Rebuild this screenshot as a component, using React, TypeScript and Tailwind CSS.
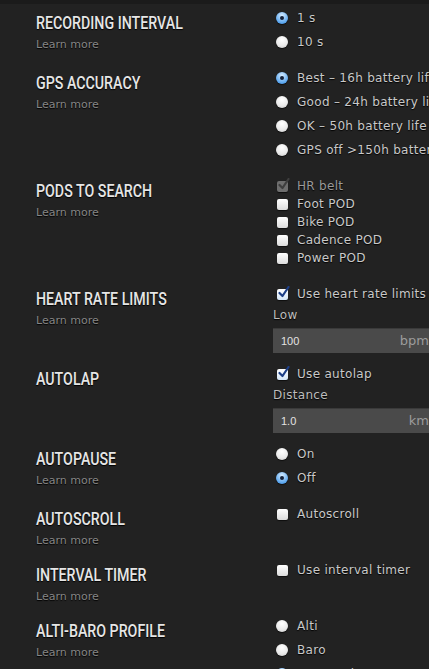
import React from 'react'

const body = { fontFamily: '"DejaVu Sans", "Liberation Sans", sans-serif' }
const head = { fontFamily: 'Roboto, "Liberation Sans", sans-serif' }

function Radio({ label, checked }: { label: string; checked?: boolean }) {
  return (
    <div className="flex h-6 items-center">
      <span
        className={
          'ml-[3px] flex h-3 w-3 shrink-0 items-center justify-center rounded-full shadow-[0_1px_1px_rgba(0,0,0,0.6)] ' +
          (checked
            ? 'bg-[radial-gradient(circle_at_50%_30%,#d6ecff,#5aa6ef_70%,#3f86d6)]'
            : 'bg-[radial-gradient(circle_at_50%_30%,#ffffff,#e9e9e9_60%,#c4c4c4)]')
        }
      >
        {checked && <span className="h-1 w-1 rounded-full bg-[#14213a]" />}
      </span>
      <span className="ml-[9px] whitespace-nowrap text-[12px] tracking-[0.3px] text-[#c9c9c9] [text-shadow:0_1px_1px_#000]">
        {label}
      </span>
    </div>
  )
}

function Check({ label, checked, disabled }: { label: string; checked?: boolean; disabled?: boolean }) {
  return (
    <div className="flex h-[18px] items-center">
      <span
        className={
          'relative ml-1 h-[11px] w-[11px] shrink-0 rounded-[2px] shadow-[0_1px_1px_rgba(0,0,0,0.6)] ' +
          (disabled
            ? 'bg-[#6e6e6e]'
            : checked
              ? 'bg-[linear-gradient(#ffffff,#d4e6f7)]'
              : 'bg-[linear-gradient(#ffffff,#dcdcdc)]')
        }
      >
        {checked && (
          <svg viewBox="0 0 12 12" className="absolute -top-[3px] left-[1px] h-[13px] w-[12px]">
            <path
              d="M1.5 6.5 L4.5 9.5 L10.5 0.5"
              fill="none"
              stroke={disabled ? '#3e3e3e' : '#1d3f86'}
              strokeWidth="2.2"
              strokeLinecap="round"
              strokeLinejoin="round"
            />
          </svg>
        )}
      </span>
      <span
        className={
          'ml-[9px] whitespace-nowrap text-[12px] tracking-[0.3px] [text-shadow:0_1px_1px_#000] ' +
          (disabled ? 'text-[#9a9a9a]' : 'text-[#c9c9c9]')
        }
      >
        {label}
      </span>
    </div>
  )
}

function Field({ label, value, unit }: { label: string; value: string; unit: string }) {
  return (
    <>
      <div className="mt-1 h-4 text-[12px] leading-4 tracking-[0.3px] text-[#bdbdbd] [text-shadow:0_1px_1px_#000]">
        {label}
      </div>
      <div className="mt-[5px] flex h-[25px] w-[164px] items-center justify-between border-t border-[#3a3a3a] bg-[#4a4a4a] pl-2 pr-2">
        <span className="text-[11px] text-[#e2e2e2]" style={{ fontFamily: '"Liberation Sans", sans-serif' }}>
          {value}
        </span>
        <span className="text-[13px] text-[#9c9c9c]">{unit}</span>
      </div>
    </>
  )
}

function Section({
  title,
  learn = true,
  top,
  bottom,
  children,
}: {
  title: string
  learn?: boolean
  top: string
  bottom: string
  children: React.ReactNode
}) {
  return (
    <div className={'flex ' + bottom}>
      <div className={'w-[273px] shrink-0 overflow-hidden pl-9 ' + top}>
        <div className="h-5 leading-5">
          <span
            className="inline-block origin-left scale-x-[0.79] whitespace-nowrap text-[18px] font-medium text-[#e6e6e6] [text-shadow:0_1px_1px_#000]"
            style={head}
          >
            {title}
          </span>
        </div>
        {learn && (
          <div className="mt-1 h-4 text-[11px] leading-4 text-[#858585] [text-shadow:0_1px_1px_#000]">
            Learn more
          </div>
        )}
      </div>
      <div className="min-w-0 flex-1">{children}</div>
    </div>
  )
}

export default function App() {
  return (
    <div className="h-[669px] w-full overflow-hidden bg-[#222222]" style={body}>
      <div className="h-[4px] bg-[#1b1b1b]" />
      <div className="pt-[2px]">
        <Section title="RECORDING INTERVAL" top="pt-[7px]" bottom="pb-3">
          <Radio label="1 s" checked />
          <Radio label="10 s" />
        </Section>
        <Section title="GPS ACCURACY" top="pt-[7px]" bottom="pb-[15px]">
          <Radio label="Best – 16h battery life" checked />
          <Radio label="Good – 24h battery life" />
          <Radio label="OK – 50h battery life" />
          <Radio label="GPS off >150h battery life" />
        </Section>
        <Section title="PODS TO SEARCH" top="pt-1" bottom="pb-[18px]">
          <Check label="HR belt" checked disabled />
          <Check label="Foot POD" />
          <Check label="Bike POD" />
          <Check label="Cadence POD" />
          <Check label="Power POD" />
        </Section>
        <Section title="HEART RATE LIMITS" top="pt-1" bottom="pb-3">
          <Check label="Use heart rate limits" checked />
          <Field label="Low" value="100" unit="bpm" />
        </Section>
        <Section title="AUTOLAP" learn={false} top="pt-1" bottom="pb-[9px]">
          <Check label="Use autolap" checked />
          <Field label="Distance" value="1.0" unit="km" />
        </Section>
        <Section title="AUTOPAUSE" top="pt-[7px]" bottom="pb-[15px]">
          <Radio label="On" />
          <Radio label="Off" checked />
        </Section>
        <Section title="AUTOSCROLL" top="pt-1" bottom="pb-3">
          <Check label="Autoscroll" />
        </Section>
        <Section title="INTERVAL TIMER" top="pt-1" bottom="pb-[9px]">
          <Check label="Use interval timer" />
        </Section>
        <Section title="ALTI-BARO PROFILE" top="pt-[7px]" bottom="pb-4">
          <Radio label="Alti" />
          <Radio label="Baro" />
          <Radio label="Automatic" checked />
        </Section>
      </div>
    </div>
  )
}
